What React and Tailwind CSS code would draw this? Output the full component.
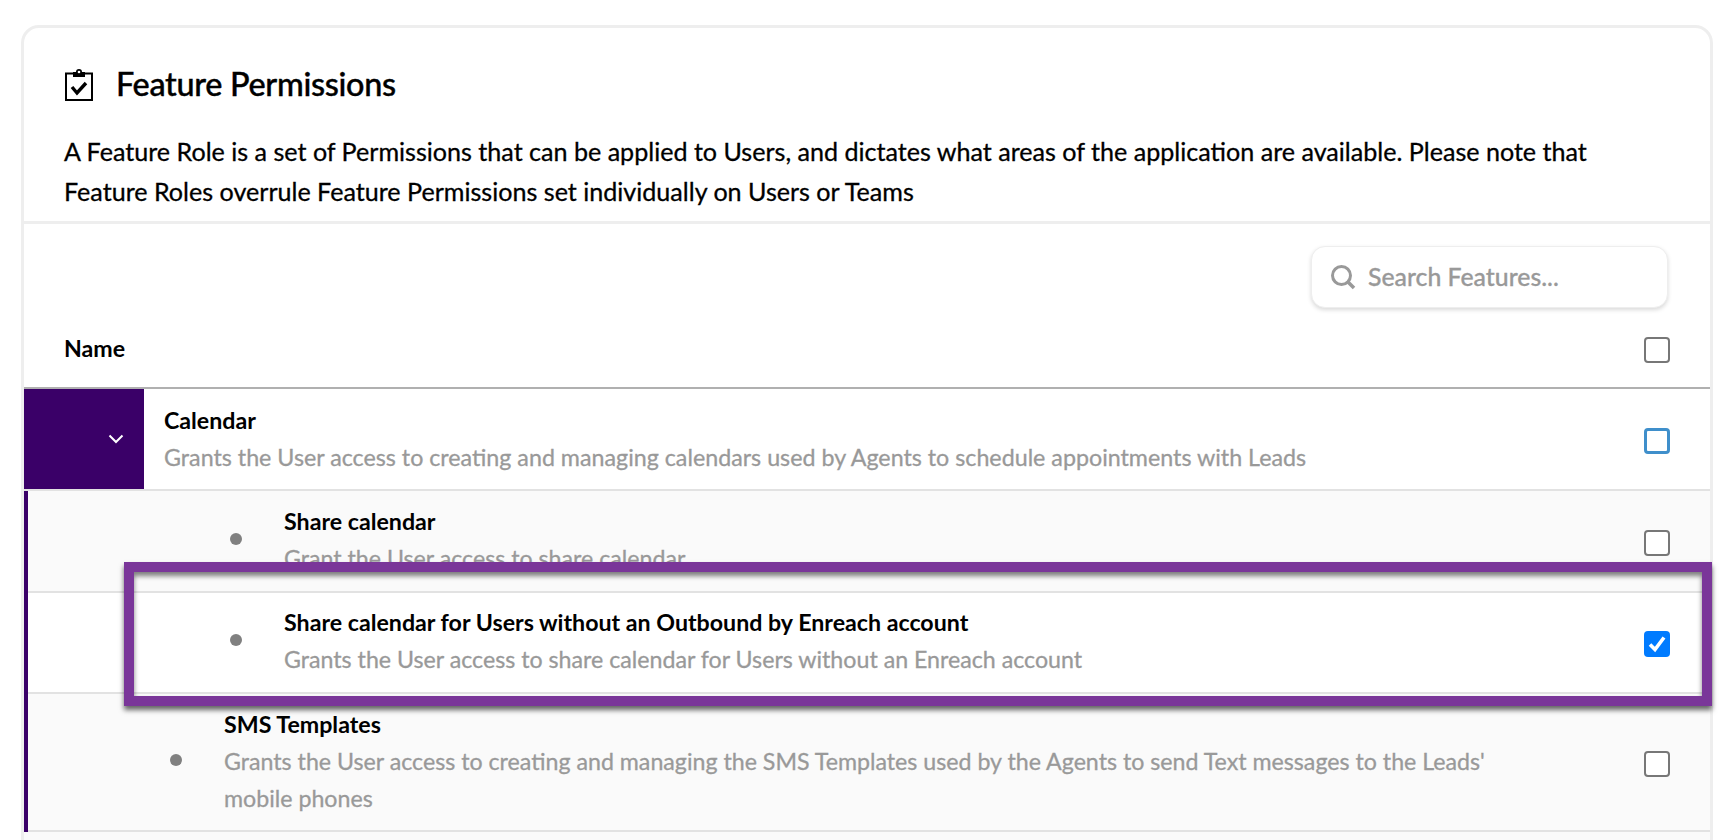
const font = { fontFamily: 'Lato, "Noto Sans", sans-serif' }

function Box({ state }) {
  if (state === 'checked') {
    return (
      <div className="w-[26px] h-[26px] rounded-[4px] bg-[#007bff] flex items-center justify-center">
        <svg width="20" height="20" viewBox="0 0 20 20">
          <path d="M3 10.5 L8 15.5 L17 3.5" fill="none" stroke="#fff" strokeWidth="3.6" />
        </svg>
      </div>
    )
  }
  if (state === 'focus') {
    return <div className="w-[26px] h-[26px] rounded-[4px] border-[3px] border-[#3f8fcb] bg-white" />
  }
  return <div className="w-[26px] h-[26px] rounded-[4px] border-2 border-[#777777] bg-white" />
}

function Row({ title, desc, state, height, bg, bulletX, textX, bulletY = '', boxY = '', titleTop }) {
  return (
    <div className={`relative flex border-b-2 border-[#e2e2e2] ${bg} ${height}`}>
      <div className={`${bulletX} flex justify-end shrink-0`}>
        <div className={`w-3 h-3 rounded-full bg-[#808080] ${bulletY}`} />
      </div>
      <div className={`${textX} ${titleTop} w-[1340px] shrink-0`}>
        <div className="text-[23.2px] leading-[37px] font-bold text-black">{title}</div>
        <div className="text-[23.2px] leading-[37px] text-[#999999] [-webkit-text-stroke:0.3px_#999999]">{desc}</div>
      </div>
      <div className={`ml-auto mr-[40px] ${boxY}`}>
        <Box state={state} />
      </div>
    </div>
  )
}

export default function App() {
  return (
    <div style={font} className="w-[1730px] h-[840px] overflow-hidden bg-white relative pl-[21px] pt-[25px]">
      <div className="w-[1692px] h-[900px] border-[3px] border-[#eeeeee] rounded-t-[18px] bg-white">
        <div className="h-[196px] border-b-[3px] border-[#eeeeee] pl-[40px] pt-[38px]">
          <div className="flex items-center h-[36px]">
            <svg width="30" height="34" viewBox="0 0 30 34" className="mr-[22px] mt-[2px]">
              <path d="M9 5.5 H2 V32 H28 V5.5 H21" fill="none" stroke="#000" strokeWidth="2" />
              <path d="M9 4 H12 A3 3 0 0 1 18 4 H21 V9 H9 Z" fill="#000" />
              <circle cx="15" cy="4" r="1.3" fill="#fff" />
              <path d="M8 19 L13 25 L22 15" fill="none" stroke="#000" strokeWidth="3.4" />
            </svg>
            <h1 className="text-[32.4px] font-medium text-black tracking-[-0.3px] [-webkit-text-stroke:0.4px_black]">Feature Permissions</h1>
          </div>
          <p className="mt-[29px] text-[25.1px] leading-[40px] text-black w-[1620px] [-webkit-text-stroke:0.3px_black]">
            A Feature Role is a set of Permissions that can be applied to Users, and dictates what areas of the application are available. Please note that
            <br />
            Feature Roles overrule Feature Permissions set individually on Users or Teams
          </p>
        </div>

        <div className="h-[165px] border-b-2 border-[#b0b0b0] relative">
          <div className="flex justify-end pr-[42px] pt-[22px]">
            <div className="w-[357px] h-[62px] rounded-[14px] border border-[#eeeeee] bg-white shadow-[0_2px_4px_rgba(0,0,0,0.15)] flex items-center pl-[18px]">
              <svg width="26" height="26" viewBox="0 0 26 26">
                <circle cx="11.5" cy="11.5" r="9" fill="none" stroke="#999" strokeWidth="3" />
                <path d="M18 18 L24 24" stroke="#999" strokeWidth="3.5" />
              </svg>
              <span className="ml-[12px] text-[24.8px] font-medium text-[#999999] [-webkit-text-stroke:0.3px_#999999]">Search Features...</span>
            </div>
          </div>
          <div className="flex items-center justify-between pl-[40px] pr-[40px] mt-[23px]">
            <span className="text-[23.2px] font-bold text-black pb-[4px]">Name</span>
            <Box />
          </div>
        </div>

        <div className="flex h-[102px] border-b-2 border-[#e2e2e2]">
          <div className="w-[120px] bg-[#3a0068] flex items-end justify-end pr-[20px] pb-[45px] shrink-0">
            <svg width="16" height="10" viewBox="0 0 16 10">
              <path d="M1.5 1.5 L8 8 L14.5 1.5" fill="none" stroke="#fff" strokeWidth="2" />
            </svg>
          </div>
          <div className="pl-[20px] pt-[13px]">
            <div className="text-[23.2px] leading-[37px] font-bold text-black">Calendar</div>
            <div className="text-[23.25px] leading-[37px] text-[#999999] [-webkit-text-stroke:0.3px_#999999]">
              Grants the User access to creating and managing calendars used by Agents to schedule appointments with Leads
            </div>
          </div>
          <div className="ml-auto mr-[40px] mt-[39px]">
            <Box state="focus" />
          </div>
        </div>

        <div className="border-l-4 border-[#3a0068]">
          <Row
            title="Share calendar"
            desc="Grant the User access to share calendar"
            height="h-[102px]"
            bg="bg-[#fafafa]"
            bulletX="w-[214px]"
            textX="pl-[42px]"
            titleTop="pt-[12px]"
            bulletY="mt-[42px]"
            boxY="mt-[39px]"
          />
          <Row
            title="Share calendar for Users without an Outbound by Enreach account"
            desc="Grants the User access to share calendar for Users without an Enreach account"
            height="h-[101px]"
            bg="bg-white"
            bulletX="w-[214px]"
            textX="pl-[42px]"
            titleTop="pt-[11px]"
            bulletY="mt-[41px]"
            boxY="mt-[38px]"
            state="checked"
          />
          <Row
            title="SMS Templates"
            desc={<>Grants the User access to creating and managing the SMS Templates used by the Agents to send Text messages to the Leads'<br />mobile phones</>}
            height="h-[138px]"
            bg="bg-[#fafafa]"
            bulletX="w-[154px]"
            textX="pl-[42px]"
            titleTop="pt-[12px]"
            bulletY="mt-[60px]"
            boxY="mt-[57px]"
          />
        </div>
        <div className="h-[40px] bg-[#fafafa]" />
      </div>

      <div className="absolute left-[124px] top-[562px] w-[1588px] h-[144px] border-[10px] border-[#7a3699] shadow-[0_4px_5px_rgba(0,0,0,0.6),inset_0_4px_5px_rgba(0,0,0,0.5)]" />
    </div>
  )
}
